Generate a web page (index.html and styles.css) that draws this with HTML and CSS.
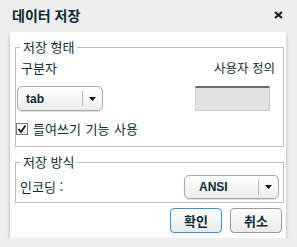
FILE: index.html
```html
<!DOCTYPE html>
<html lang="ko">
<head>
    <meta charset="UTF-8">
    <title>데이터 저장</title>
    <link rel="stylesheet" href="styles.css">
</head>
<body>

<div class="header">
    <span class="title">데이터 저장</span>
    <span class="close">
        <svg width="9" height="8" viewBox="0 0 9 8"><path d="M1 1 L8 7 M8 1 L1 7" stroke="#1a1a1a" stroke-width="2.2"/></svg>
    </span>
</div>

<div class="panel">
    <fieldset class="group group-format">
        <legend>저장 형태</legend>
        <div class="row labels">
            <span class="label">구분자</span>
            <span class="label label-right">사용자 정의</span>
        </div>
        <div class="row controls">
            <div class="select select-tab">
                <span class="select-value">tab</span>
                <span class="select-arrow"><svg width="7" height="4" viewBox="0 0 7 4"><path d="M0 0 H7 L3.5 4 Z" fill="#111"/></svg></span>
            </div>
            <div class="text-input"></div>
        </div>
        <div class="row check-row">
            <span class="checkbox">
                <svg width="10" height="10" viewBox="0 0 10 10"><path d="M1.5 5 L4 8 L8.5 1.5" stroke="#1b1b1b" stroke-width="1.8" fill="none"/></svg>
            </span>
            <span class="check-label">들여쓰기 기능 사용</span>
        </div>
    </fieldset>

    <fieldset class="group group-method">
        <legend>저장 방식</legend>
        <div class="row encoding">
            <span class="label">인코딩 :</span>
            <div class="select select-ansi">
                <span class="select-value">ANSI</span>
                <span class="select-arrow"><svg width="7" height="4" viewBox="0 0 7 4"><path d="M0 0 H7 L3.5 4 Z" fill="#111"/></svg></span>
            </div>
        </div>
    </fieldset>

    <div class="buttons">
        <button class="btn btn-primary">확인</button>
        <button class="btn">취소</button>
    </div>
</div>

</body>
</html>
```

FILE: styles.css
```css
body, html {
    margin: 0;
    padding: 0;
    background-color: #eeeeee;
    font-family: "Noto Sans CJK KR", "Noto Sans", sans-serif;
    color: #0f2e38;
}

.header {
    height: 32px;
    display: flex;
    align-items: center;
    justify-content: space-between;
    padding: 0 14px 0 12px;
}

.title {
    font-size: 14px;
    font-weight: bold;
    color: #0c2a33;
    line-height: 16px;
    margin-top: -3px;
}

.close {
    display: flex;
    margin-top: -3px;
}

.panel {
    margin: 0 11px 0 10px;
    background-color: #ffffff;
    padding: 8px 2px 5px 5px;
    box-shadow: 0 3px 3px rgba(0, 0, 0, 0.3);
}

.group {
    margin: 0;
    border: 1px solid #bdbdbd;
    padding: 0 2px 0 1px;
}

.group legend {
    font-size: 13px;
    line-height: 14px;
    padding: 0 3px;
    margin-left: 3px;
}

.group-method {
    margin-top: 8px;
}

.row {
    display: flex;
    align-items: center;
    justify-content: space-between;
}

.label {
    font-size: 13px;
    line-height: 16px;
    padding-left: 4px;
}

.labels {
    margin-top: 6px;
    height: 16px;
}

.label-right {
    margin-right: 6px;
    font-size: 12.5px;
}

.controls {
    margin-top: 10px;
}

.select {
    box-sizing: border-box;
    height: 25px;
    border: 1px solid #a9a9a9;
    border-radius: 5px;
    background: linear-gradient(#ffffff, #ececec);
    box-shadow: 0 1px 1px rgba(0, 0, 0, 0.15);
    display: flex;
    align-items: center;
}

.select-value {
    flex: 1;
    font-family: "Liberation Sans", Arial, sans-serif;
    font-weight: bold;
    font-size: 12px;
    color: #0c2a33;
    padding-left: 8px;
}

.select-arrow {
    width: 19px;
    height: 15px;
    border-left: 1px solid #bcbcbc;
    display: flex;
    align-items: center;
    justify-content: center;
}

.select-tab {
    width: 86px;
}

.select-ansi {
    width: 95px;
    height: 24px;
    margin-right: 2px;
}

.select-ansi .select-value {
    padding-left: 14px;
}

.text-input {
    box-sizing: border-box;
    width: 75px;
    height: 25px;
    margin-right: 11px;
    background-color: #e3e1e3;
    border: 1px solid #cccccc;
    border-top: 2px solid #6b6b6b;
}

.check-row {
    justify-content: flex-start;
    margin-top: 11px;
    margin-bottom: 10px;
    height: 14px;
}

.checkbox {
    box-sizing: border-box;
    width: 12px;
    height: 12px;
    margin-left: -1px;
    border: 1px solid #7a7a7a;
    background: linear-gradient(#ffffff, #ececec);
    display: flex;
    align-items: center;
    justify-content: center;
}

.check-label {
    font-size: 13px;
    line-height: 14px;
    margin-left: 5px;
    word-spacing: 1px;
}

.encoding {
    margin-top: 6px;
    margin-bottom: 3px;
}

.encoding .label {
    padding-left: 3px;
}

.buttons {
    display: flex;
    justify-content: flex-end;
    gap: 8px;
    margin-top: 5px;
    margin-right: 2px;
}

.btn {
    box-sizing: border-box;
    width: 52px;
    height: 25px;
    padding: 0;
    border: 1px solid #9a9a9a;
    border-radius: 4px;
    background: linear-gradient(#ffffff, #e9e9e9);
    font-family: "Noto Sans CJK KR", sans-serif;
    font-weight: bold;
    font-size: 13px;
    color: #0c2a33;
}

.btn-primary {
    border-color: #2f97d8;
}
```
